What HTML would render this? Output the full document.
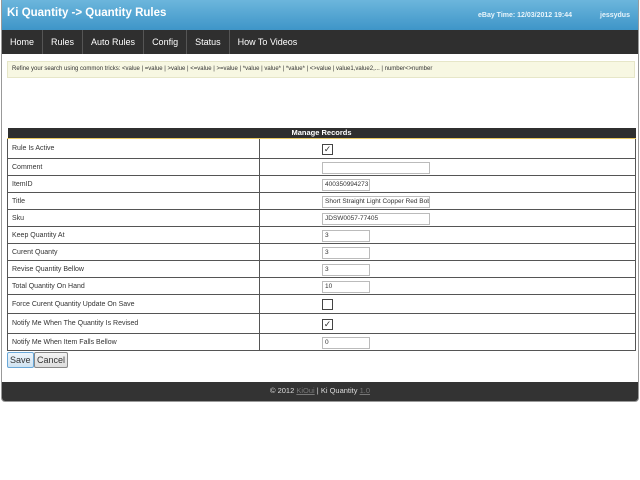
<!DOCTYPE html>
<html><head><style>
*{box-sizing:border-box}
body{margin:0;width:640px;height:480px;background:#fff;font-family:"Liberation Sans",Arial,sans-serif;font-size:8px;color:#333;position:relative;overflow:hidden}
#wrap{position:absolute;left:1px;top:0;width:638px;height:402px;border:1px solid #999;border-top:none;border-radius:0 0 4px 4px;background:#fff;overflow:hidden}
#hdr{height:30px;background:linear-gradient(#6cb6dc,#3e95c8);position:relative;color:#fff}
#hdr .t{position:absolute;left:5px;top:7px;font-size:11.5px;font-weight:bold}
#hdr .r{position:absolute;top:12px;font-size:7px;font-weight:bold;color:#e8f4fb}
#nav{height:24px;background:#2f2f2f}
#nav span{float:left;height:24px;line-height:24px;padding:0 8px;color:#fff;font-size:9px;border-right:1px solid #555}
#srch{position:absolute;left:5px;top:61px;width:628px;height:17px;background:#f7f7e2;border:1px solid #e6e6c8;font-size:6px;line-height:15px;padding-left:4px}
table{position:absolute;left:5px;top:128px;width:629px;border-collapse:collapse;table-layout:fixed}
th{background:#2f2f2f;color:#fff;font-size:7.5px;height:10px;padding:0;border-bottom:1px solid #e8c860;line-height:9px}
td{border:1px solid #555;font-size:7px;padding:2px 4px 0;height:17px;vertical-align:middle;line-height:10px}
td.v{padding-left:62px}
.i{display:block;border:1px solid #bbb;height:12px;font-size:6.5px;line-height:10px;padding-left:2px;overflow:hidden;white-space:nowrap}
.cb{display:block;width:11px;height:11px;border:1px solid #444;font-size:9px;line-height:9px;text-align:center}
.btn{position:absolute;top:352px;height:16px;border:1px solid #888;border-radius:2px;font-size:9px;line-height:14px;padding:0 2px;background:linear-gradient(#f4f4f4,#ddd)}
#ftr{position:absolute;left:0;top:382px;width:100%;height:19px;background:#333;color:#ddd;text-align:center;font-size:7.5px;line-height:17px}
#ftr u{color:#777}
</style></head><body>
<div id="wrap">
<div id="hdr"><div class="t">Ki Quantity -&gt; Quantity Rules</div><div class="r" style="left:476px">eBay Time: 12/03/2012 19:44</div><div class="r" style="left:598px">jessydus</div></div>
<div id="nav"><span>Home</span><span>Rules</span><span>Auto Rules</span><span>Config</span><span>Status</span><span style="border:none">How To Videos</span></div>
<div id="srch">Refine your search using common tricks: &lt;value | =value | &gt;value | &lt;=value | &gt;=value | *value | value* | *value* | &lt;&gt;value | value1,value2,... | number&lt;&gt;number</div>
<table>
<colgroup><col style="width:252px"><col></colgroup>
<tr><th colspan="2">Manage Records</th></tr>
<tr><td style="height:20px">Rule Is Active</td><td class="v"><span class="cb">✓</span></td></tr>
<tr><td>Comment</td><td class="v"><span class="i" style="width:108px"></span></td></tr>
<tr><td>ItemID</td><td class="v"><span class="i" style="width:48px">400350994273</span></td></tr>
<tr><td>Title</td><td class="v"><span class="i" style="width:108px">Short Straight Light Copper Red Bob Wig Wi</span></td></tr>
<tr><td>Sku</td><td class="v"><span class="i" style="width:108px">JDSW0057-77405</span></td></tr>
<tr><td>Keep Quantity At</td><td class="v"><span class="i" style="width:48px">3</span></td></tr>
<tr><td>Curent Quanty</td><td class="v"><span class="i" style="width:48px">3</span></td></tr>
<tr><td>Revise Quantity Bellow</td><td class="v"><span class="i" style="width:48px">3</span></td></tr>
<tr><td>Total Quantity On Hand</td><td class="v"><span class="i" style="width:48px">10</span></td></tr>
<tr><td style="height:19px">Force Curent Quantity Update On Save</td><td class="v"><span class="cb"></span></td></tr>
<tr><td style="height:20px">Notify Me When The Quantity Is Revised</td><td class="v"><span class="cb">✓</span></td></tr>
<tr><td>Notify Me When Item Falls Bellow</td><td class="v"><span class="i" style="width:48px">0</span></td></tr>
</table>
<div class="btn" style="left:5px;border-color:#6aa8d8;background:linear-gradient(#eef6fc,#cfe3f2)">Save</div>
<div class="btn" style="left:32px">Cancel</div>
<div id="ftr">© 2012 <u>KiOui</u> | Ki Quantity <u>1.0</u></div>
</div>
</body></html>
